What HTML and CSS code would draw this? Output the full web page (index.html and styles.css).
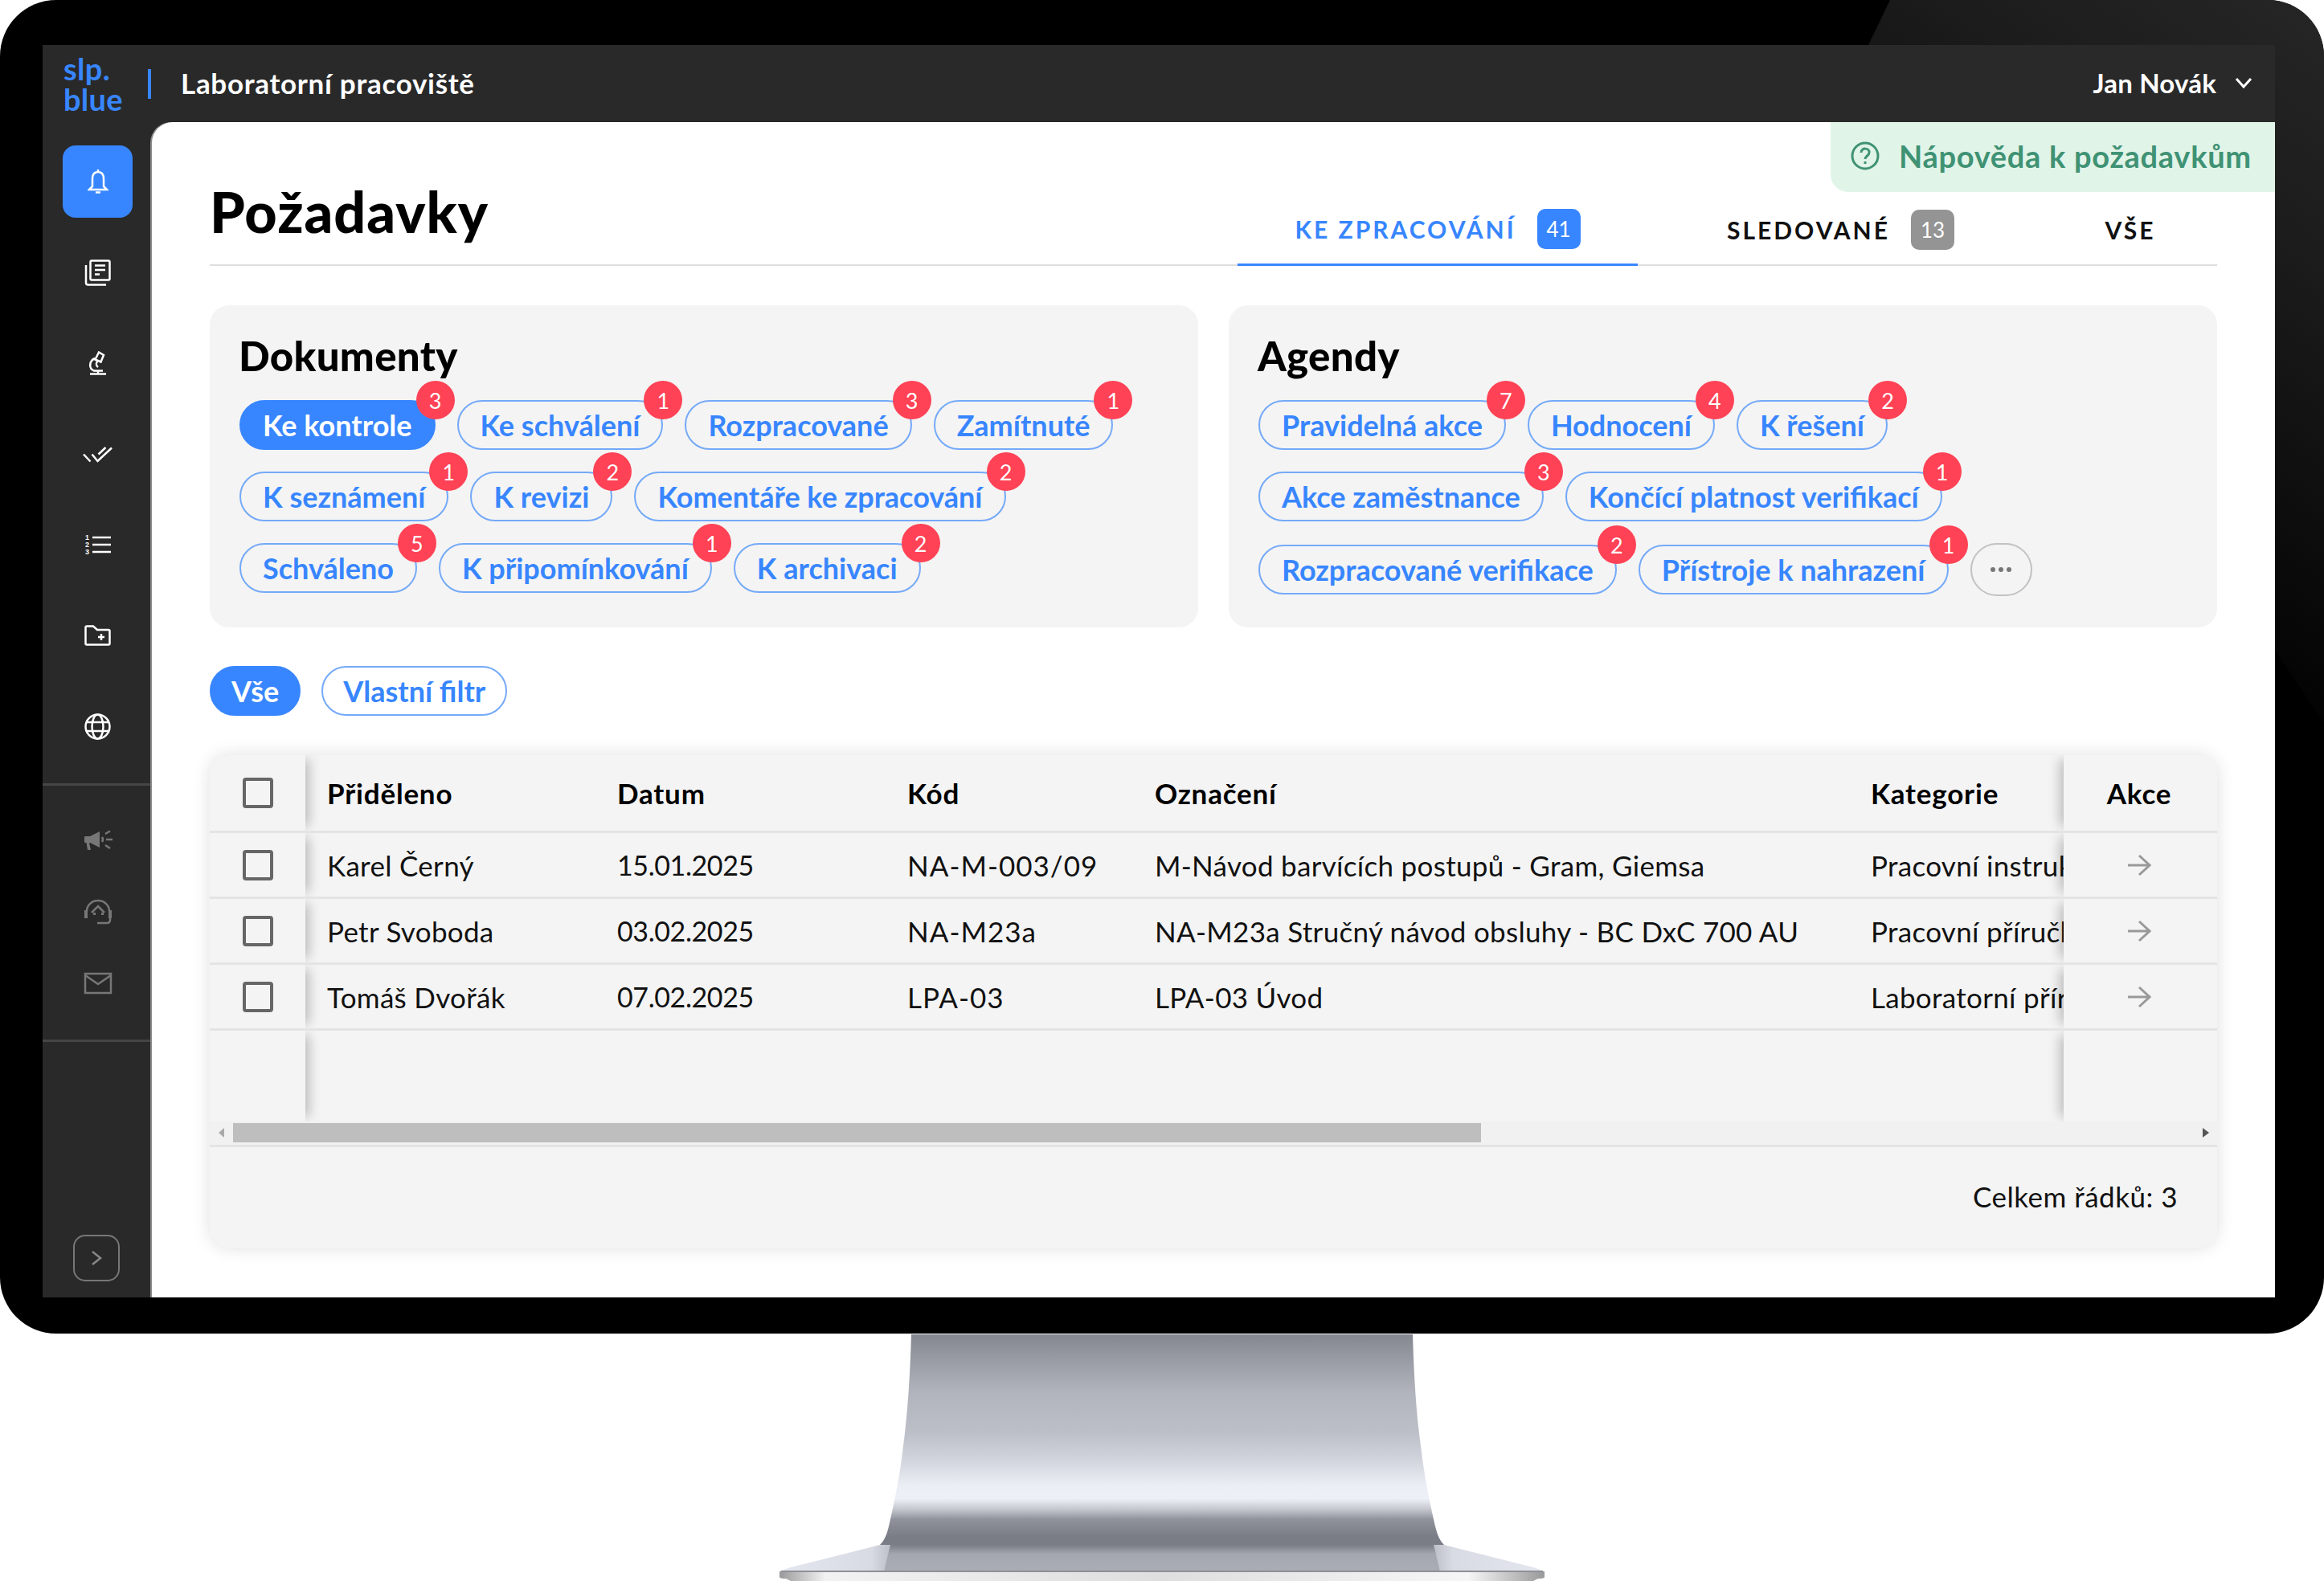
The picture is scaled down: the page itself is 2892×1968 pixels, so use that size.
FILE: index.html
```html
<!DOCTYPE html>
<html lang="cs">

<head>
  <meta charset="UTF-8">
  <title>Požadavky</title>
  <link rel="stylesheet" href="styles.css">
</head>

<body>
  <div class="monitor">
    <div class="screen">
      <header class="topbar">
        <div class="logo"><span>slp.</span><span>blue</span></div>
        <div class="logo-line"></div>
        <div class="app-name">Laboratorní pracoviště</div>
        <div class="user">
          Jan Novák
          <svg class="user-arrow" viewBox="0 0 22 14"><path d="M2 2 L11 12 L20 2" /></svg>
        </div>
      </header>

      <div class="workspace">
        <nav class="sidebar">
          <div class="nav-main">
            <a class="nav-item active">
              <svg width="26" height="32" viewBox="0 0 26 32"><path d="M13 4 C8 4 6 8 6 13 V22 L2 26 H24 L20 22 V13 C20 8 18 4 13 4 Z M13 1 V4 M10 29.5 H16" /></svg>
            </a>
            <a class="nav-item">
              <svg width="33" height="33" viewBox="0 0 33 33"><path d="M9 1.500 H30 Q31.500 1.500 31.500 3 V24 Q31.500 25.500 30 25.500 H9 Q7.500 25.500 7.500 24 V3 Q7.500 1.500 9 1.500 Z M2 7 V29 Q2 31.500 4.500 31.500 H27 M13 7.500 H26 M13 13 H26 M13 18.500 H19" /></svg>
            </a>
            <a class="nav-item">
              <svg width="24" height="30" viewBox="0 0 24 30"><path d="M13 1.500 L8.500 10.500 L15.500 13.500 L19 5 Z M8 9 C1 12 0 22 7 24.500 H18 M11 13 A5 5 0 0 0 12 20 M2 28.500 H22 M12 24.500 V28.500" /></svg>
            </a>
            <a class="nav-item">
              <svg width="37" height="21" viewBox="0 0 37 21"><path d="M1 10.500 L9.500 19.500 M11.500 10.500 L18.500 19 L36 2.500 M19.500 10.500 L28.500 2" /></svg>
            </a>
            <a class="nav-item">
              <svg width="32" height="26" viewBox="0 0 32 26">
                <path d="M9 4 H32 M9 13 H32 M9 22 H32" />
                <text class="nav-num" x="0" y="7">1</text>
                <text class="nav-num" x="0" y="16">2</text>
                <text class="nav-num" x="0" y="25">3</text>
              </svg>
            </a>
            <a class="nav-item">
              <svg width="33" height="26" viewBox="0 0 33 26"><path d="M1.500 3 Q1.500 1.500 3 1.500 H11 L16 6 H30 Q31.500 6 31.500 7.500 V23 Q31.500 24.500 30 24.500 H3 Q1.500 24.500 1.500 23 Z M21 11 V19 M17 15 H25" /></svg>
            </a>
            <a class="nav-item">
              <svg width="33" height="33" viewBox="0 0 33 33"><circle cx="16.500" cy="16.500" r="15" /><ellipse cx="16.500" cy="16.500" rx="7" ry="15" /><path d="M2 11 H31 M2 22 H31" /></svg>
            </a>
          </div>

          <div class="nav-extra">
            <a class="nav-item dim">
              <svg width="36" height="27" viewBox="0 0 36 27">
                <path class="fill" d="M1 9 Q1 8 2 8 H8 L20 2 V22 L8 16 H7 L9 25 H5 L3.500 16 H2 Q1 16 1 15 Z" />
                <path d="M23 9 Q25 12 23 15 M27 5 L33 1.500 M28 12 H36 M27 19 L33 23" />
              </svg>
            </a>
            <a class="nav-item dim">
              <svg width="36" height="32" viewBox="0 0 36 32">
                <path d="M4 15 A14 13 0 0 1 32 15 M10 17 L18 9 L26 17 M33 23 V26 Q33 30 29 30 H17" />
                <path class="fill" d="M1 14 H5 V24 H1 Z M31 14 H35 V24 H31 Z M12 17 H15 V20 H12 Z M22 17 H25 V20 H22 Z" />
              </svg>
            </a>
            <a class="nav-item dim">
              <svg width="36" height="28" viewBox="0 0 36 28"><path d="M2 2 H34 V26 H2 Z M2 4 L18 15 L34 4" /></svg>
            </a>
          </div>

          <a class="expand">
            <svg width="14" height="20" viewBox="0 0 14 20"><path d="M2 2 L12 10 L2 18" /></svg>
          </a>
        </nav>

        <main class="content">
          <a class="help">
            <svg width="36" height="36" viewBox="0 0 36 36"><circle cx="18" cy="18" r="16" /><path d="M13 14 C13 7 24 8 23 14 C23 18 18 18 18 22 M18 25 V28" /></svg>
            Nápověda k požadavkům
          </a>

          <div class="page-head">
            <h1 class="page-title">Požadavky</h1>
            <div class="tabs">
              <a class="tab tab-first active">KE ZPRACOVÁNÍ <span class="tab-count">41</span></a>
              <a class="tab tab-second">SLEDOVANÉ <span class="tab-count grey">13</span></a>
              <a class="tab tab-third">VŠE</a>
            </div>
          </div>

          <div class="panels">
            <section class="panel">
              <h2 class="panel-title">Dokumenty</h2>
              <div class="chip-row">
                <a class="chip active">Ke kontrole<span class="count">3</span></a>
                <a class="chip">Ke schválení<span class="count">1</span></a>
                <a class="chip">Rozpracované<span class="count">3</span></a>
                <a class="chip">Zamítnuté<span class="count">1</span></a>
              </div>
              <div class="chip-row">
                <a class="chip">K seznámení<span class="count">1</span></a>
                <a class="chip">K revizi<span class="count">2</span></a>
                <a class="chip">Komentáře ke zpracování<span class="count">2</span></a>
              </div>
              <div class="chip-row">
                <a class="chip">Schváleno<span class="count">5</span></a>
                <a class="chip">K připomínkování<span class="count">1</span></a>
                <a class="chip">K archivaci<span class="count">2</span></a>
              </div>
            </section>

            <section class="panel">
              <h2 class="panel-title">Agendy</h2>
              <div class="chip-row">
                <a class="chip">Pravidelná akce<span class="count">7</span></a>
                <a class="chip">Hodnocení<span class="count">4</span></a>
                <a class="chip">K řešení<span class="count">2</span></a>
              </div>
              <div class="chip-row">
                <a class="chip">Akce zaměstnance<span class="count">3</span></a>
                <a class="chip">Končící platnost verifikací<span class="count">1</span></a>
              </div>
              <div class="chip-row">
                <a class="chip">Rozpracované verifikace<span class="count">2</span></a>
                <a class="chip">Přístroje k nahrazení<span class="count">1</span></a>
                <a class="more"><i></i><i></i><i></i></a>
              </div>
            </section>
          </div>

          <div class="filters">
            <a class="chip active">Vše</a>
            <a class="chip">Vlastní filtr</a>
          </div>

          <div class="table-card">
            <div class="row head">
              <div class="cell check"><span class="box"></span></div>
              <div class="cell">Přiděleno</div>
              <div class="cell">Datum</div>
              <div class="cell">Kód</div>
              <div class="cell">Označení</div>
              <div class="cell">Kategorie</div>
              <div class="cell action">Akce</div>
            </div>
            <div class="row">
              <div class="cell check"><span class="box"></span></div>
              <div class="cell">Karel Černý</div>
              <div class="cell date">15.01.2025</div>
              <div class="cell code">NA-M-003/09</div>
              <div class="cell">M-Návod barvících postupů - Gram, Giemsa</div>
              <div class="cell">Pracovní instrukce</div>
              <div class="cell action"><svg class="go" viewBox="0 0 30 30"><path d="M1 15 H28 M15 3 L28 15 L15 27" /></svg></div>
            </div>
            <div class="row">
              <div class="cell check"><span class="box"></span></div>
              <div class="cell">Petr Svoboda</div>
              <div class="cell date">03.02.2025</div>
              <div class="cell code">NA-M23a</div>
              <div class="cell">NA-M23a Stručný návod obsluhy - BC DxC 700 AU</div>
              <div class="cell">Pracovní příručka</div>
              <div class="cell action"><svg class="go" viewBox="0 0 30 30"><path d="M1 15 H28 M15 3 L28 15 L15 27" /></svg></div>
            </div>
            <div class="row">
              <div class="cell check"><span class="box"></span></div>
              <div class="cell">Tomáš Dvořák</div>
              <div class="cell date">07.02.2025</div>
              <div class="cell code">LPA-03</div>
              <div class="cell">LPA-03 Úvod</div>
              <div class="cell">Laboratorní příručka</div>
              <div class="cell action"><svg class="go" viewBox="0 0 30 30"><path d="M1 15 H28 M15 3 L28 15 L15 27" /></svg></div>
            </div>
            <div class="row filler">
              <div class="cell check"></div>
              <div class="cell"></div>
              <div class="cell"></div>
              <div class="cell"></div>
              <div class="cell"></div>
              <div class="cell"></div>
              <div class="cell action"></div>
            </div>

            <div class="scrollbar">
              <span class="scroll-left"></span>
              <span class="scroll-thumb"></span>
              <span class="scroll-right"></span>
            </div>

            <div class="table-foot">Celkem řádků: 3</div>
          </div>
        </main>
      </div>
    </div>
  </div>

  <svg class="stand" viewBox="0 0 1000 308" width="1000" height="308">
    <defs>
      <linearGradient id="neck" x1="0" y1="0" x2="0" y2="1">
        <stop offset="0" stop-color="#84878f" />
        <stop offset="0.148" stop-color="#9da0a8" />
        <stop offset="0.275" stop-color="#b1b4bc" />
        <stop offset="0.465" stop-color="#bcbfc8" />
        <stop offset="0.59" stop-color="#d0d3db" />
        <stop offset="0.72" stop-color="#eceef5" />
        <stop offset="0.78" stop-color="#eef0f7" />
        <stop offset="0.83" stop-color="#c5c8ce" />
        <stop offset="0.88" stop-color="#8f929a" />
        <stop offset="0.96" stop-color="#7a7d86" />
        <stop offset="1" stop-color="#7a7d86" />
      </linearGradient>
      <linearGradient id="flank" x1="0" y1="0" x2="1" y2="0">
        <stop offset="0" stop-color="#e4e7ef" />
        <stop offset="0.12" stop-color="#d8dbe3" />
        <stop offset="0.16" stop-color="#acafb7" />
        <stop offset="0.84" stop-color="#acafb7" />
        <stop offset="0.88" stop-color="#d8dbe3" />
        <stop offset="1" stop-color="#e4e7ef" />
      </linearGradient>
      <linearGradient id="foot" x1="0" y1="0" x2="0" y2="1">
        <stop offset="0" stop-color="#7a7d86" />
        <stop offset="0.35" stop-color="#a4a7af" />
        <stop offset="1" stop-color="#aaadb5" />
      </linearGradient>
      <linearGradient id="rim" x1="0" y1="0" x2="1" y2="0">
        <stop offset="0" stop-color="#9a9a9c" />
        <stop offset="0.06" stop-color="#f2f2f2" />
        <stop offset="0.5" stop-color="#dedede" />
        <stop offset="0.9" stop-color="#f6f6f6" />
        <stop offset="1" stop-color="#9a9a9c" />
      </linearGradient>
    </defs>
    <path fill="url(#flank)" d="M38 291 L149 263 H851 L962 291 Q976 295 976 298 H24 Q24 295 38 291 Z" />
    <path fill="url(#foot)" d="M162 263 H838 L846 296 H154 Z" />
    <path fill="url(#neck)" d="M188 1 H812 C814 70 818 110 822 140 C826 175 832 205 840 240 Q844 257 851 263 H149 Q156 257 160 240 C168 205 174 175 178 140 C182 110 186 70 188 1 Z" />
    <path fill="url(#rim)" d="M24 296 H976 V303 Q976 305 968 305 L962 308 H38 L32 305 Q24 305 24 303 Z" />
    <path fill="#8f9097" d="M26 295 H974 V297 H26 Z" />
  </svg>
</body>

</html>
```

FILE: styles.css
```css
body {
  margin: 0;
  background: #fff;
  font-family: Lato, "Open Sans", sans-serif;
  color: #111;
}

a {
  text-decoration: none;
  cursor: pointer;
}

/* Monitor frame */
.monitor {
  position: relative;
  box-sizing: border-box;
  width: 2892px;
  height: 1660px;
  padding: 56px 61px 45px 53px;
  background: #000;
  border-radius: 70px;
  overflow: hidden;
}

.monitor::before {
  content: "";
  position: absolute;
  top: 0;
  right: 0;
  width: 567px;
  height: 900px;
  background: linear-gradient(215deg, #262626 0, #1c1c1c 25%, #000 75%);
  clip-path: polygon(27px 0, 100% 0, 100% 100%, 0 56px);
}

.screen {
  position: relative;
  display: flex;
  flex-direction: column;
  height: 100%;
  background: #292929;
}

/* Top bar */
.topbar {
  display: flex;
  align-items: center;
  height: 96px;
  padding-left: 26px;
  padding-right: 28px;
  color: #fff;
}

.logo {
  width: 105px;
  color: #3886ff;
  font-size: 38px;
  font-weight: 700;
  letter-spacing: 0.3px;
}

.logo span {
  display: block;
  height: 38px;
  line-height: 38px;
}

.logo-line {
  width: 4px;
  height: 37px;
  background: #3886ff;
}

.app-name {
  margin-left: 37px;
  padding-bottom: 2px;
  font-size: 35px;
  font-weight: 700;
  letter-spacing: 0.7px;
}

.user {
  display: flex;
  align-items: center;
  gap: 23px;
  margin-left: auto;
  padding-bottom: 2px;
  font-size: 33px;
  font-weight: 700;
  letter-spacing: 0.2px;
}

.user-arrow {
  width: 22px;
  height: 14px;
  fill: none;
  stroke: #fff;
  stroke-width: 3;
}

.workspace {
  display: flex;
  flex: 1;
  min-height: 0;
}

/* Sidebar */
.sidebar {
  display: flex;
  flex-direction: column;
  flex: none;
  width: 136px;
}

.sidebar svg {
  fill: none;
  stroke: #fff;
  stroke-width: 2.5;
}

.nav-main {
  padding-top: 29px;
  padding-bottom: 3px;
  border-bottom: 3px solid #454545;
}

.nav-item {
  display: flex;
  align-items: center;
  justify-content: center;
  width: 87px;
  height: 90px;
  margin-left: 25px;
  margin-bottom: 23px;
  border-radius: 16px;
}

.nav-item.active {
  background: #3886ff;
}

.nav-num {
  fill: #fff;
  stroke: none;
  font-family: "Liberation Sans", sans-serif;
  font-size: 9px;
  font-weight: 700;
}

.nav-extra {
  padding-top: 24px;
  padding-bottom: 25px;
  border-bottom: 3px solid #454545;
}

.nav-extra .nav-item {
  height: 88px;
  margin-bottom: 1px;
}

.sidebar .dim svg {
  stroke: #777;
}

.sidebar .dim .fill {
  fill: #777;
  stroke: none;
}

.expand {
  display: flex;
  align-items: center;
  justify-content: center;
  box-sizing: border-box;
  width: 58px;
  height: 58px;
  margin-top: auto;
  margin-bottom: 20px;
  margin-left: 38px;
  border: 2px solid #777;
  border-radius: 15px;
}

.sidebar .expand svg {
  stroke: #888;
}

/* Content */
.content {
  position: relative;
  flex: 1;
  box-sizing: border-box;
  padding: 0 72px;
  background: #fff;
  border-top-left-radius: 26px;
  box-shadow: -2px 0 0 #8a8a8a;
}

.help {
  position: absolute;
  top: 0;
  right: 0;
  display: flex;
  align-items: center;
  gap: 24px;
  box-sizing: border-box;
  width: 553px;
  height: 87px;
  padding-left: 25px;
  padding-bottom: 3px;
  background: #e1f4e8;
  border-bottom-left-radius: 22px;
  color: #3f9274;
  font-size: 38px;
  font-weight: 700;
  letter-spacing: 0.7px;
  white-space: nowrap;
}

.help svg {
  flex: none;
  fill: none;
  stroke: #3f9274;
  stroke-width: 3;
}

.page-head {
  display: flex;
  justify-content: space-between;
  align-items: flex-end;
  box-sizing: border-box;
  height: 179px;
  border-bottom: 2px solid #dedede;
}

.page-title {
  margin: 0 0 26px 0;
  font-size: 70px;
  font-weight: 900;
  line-height: 80px;
  letter-spacing: 1px;
  color: #000;
}

.tabs {
  display: flex;
}

.tab {
  display: flex;
  align-items: center;
  justify-content: center;
  gap: 26px;
  box-sizing: border-box;
  height: 88px;
  margin-bottom: -2px;
  padding-bottom: 2px;
  color: #111;
  font-size: 30px;
  font-weight: 700;
  letter-spacing: 3px;
}

.tab-first {
  width: 498px;
}

.tab-second {
  width: 505px;
}

.tab-third {
  width: 216px;
}

.tab.active {
  color: #3886ff;
  border-bottom: 3px solid #3886ff;
}

.tab-count {
  display: flex;
  align-items: center;
  justify-content: center;
  width: 54px;
  height: 50px;
  background: #3886ff;
  border-radius: 10px;
  color: #fff;
  font-size: 26px;
  font-weight: 400;
  letter-spacing: 0;
}

.tab-count.grey {
  background: #949494;
}

/* Panels with chips */
.panels {
  display: flex;
  gap: 38px;
  margin-top: 49px;
}

.panel {
  flex: 1;
  box-sizing: border-box;
  height: 401px;
  padding: 31px 37px 0;
  background: #f4f4f4;
  border-radius: 24px;
}

.panel-title {
  margin: 0 0 23px -1px;
  font-size: 51px;
  font-weight: 900;
  line-height: 64px;
  letter-spacing: 0.3px;
  color: #000;
}

.chip-row {
  display: flex;
  align-items: center;
  gap: 27px;
  margin-bottom: 27px;
}

.chip {
  position: relative;
  display: flex;
  align-items: center;
  box-sizing: border-box;
  height: 62px;
  padding: 0 27px;
  border: 2px solid #74a9f8;
  border-radius: 31px;
  color: #3886ff;
  font-size: 36px;
  font-weight: 700;
  white-space: nowrap;
}

.chip.active {
  background: #3886ff;
  border-color: #3886ff;
  color: #fff;
}

.count {
  position: absolute;
  top: -26px;
  right: -26px;
  display: flex;
  align-items: center;
  justify-content: center;
  width: 48px;
  height: 48px;
  background: #ff4255;
  border-radius: 50%;
  color: #fff;
  font-size: 27px;
  font-weight: 400;
}

.more {
  display: flex;
  align-items: center;
  justify-content: center;
  gap: 4px;
  box-sizing: border-box;
  width: 77px;
  height: 66px;
  border: 2px solid #c2c2c2;
  border-radius: 33px;
}

.more i {
  width: 6px;
  height: 6px;
  background: #777;
  border-radius: 50%;
}

.filters {
  display: flex;
  gap: 26px;
  margin-top: 48px;
}

.filters .chip {
  padding: 0 25px;
}

/* Table */
.table-card {
  margin-top: 49px;
  background: #f4f4f4;
  border-radius: 24px;
  box-shadow: 0 0 22px rgba(0, 0, 0, 0.13);
  overflow: hidden;
}

.row {
  display: flex;
  height: 82px;
  box-sizing: border-box;
  border-bottom: 3px solid #e4e4e4;
  font-size: 35px;
  letter-spacing: 0.3px;
}

.row.head {
  height: 97px;
  font-weight: 700;
  letter-spacing: 0.8px;
  color: #000;
}

.row.filler {
  height: 113px;
  border-bottom: 0;
}

.cell {
  display: flex;
  align-items: center;
  flex: none;
  box-sizing: border-box;
  padding-left: 27px;
  white-space: nowrap;
  overflow: hidden;
}

.cell:nth-child(2),
.cell:nth-child(3) {
  width: 361px;
}

.cell:nth-child(4) {
  width: 308px;
}

.cell:nth-child(5) {
  width: 891px;
}

.cell:nth-child(6) {
  width: 267px;
}

.cell.date {
  font-size: 34px;
  letter-spacing: -0.4px;
}

.cell.code {
  letter-spacing: 1px;
}

.cell.check {
  position: relative;
  z-index: 1;
  justify-content: center;
  width: 119px;
  padding: 0;
  background: #f4f4f4;
  box-shadow: 10px 0 14px -6px rgba(0, 0, 0, 0.25);
  clip-path: inset(0 -24px 0 0);
}

.cell.action {
  position: relative;
  z-index: 1;
  justify-content: center;
  width: 191px;
  padding: 0 3px 0 0;
  background: #f4f4f4;
  box-shadow: -10px 0 14px -6px rgba(0, 0, 0, 0.25);
  clip-path: inset(0 0 0 -24px);
}

.box {
  box-sizing: border-box;
  width: 38px;
  height: 38px;
  border: 4px solid #666;
  border-radius: 4px;
}

.go {
  width: 30px;
  height: 30px;
  fill: none;
  stroke: #999;
  stroke-width: 3;
}

.scrollbar {
  display: flex;
  align-items: center;
  box-sizing: border-box;
  height: 32px;
  padding-bottom: 2px;
  background: #f1f1f1;
  border-bottom: 3px solid #e4e4e4;
}

.scroll-left {
  width: 0;
  height: 0;
  margin-left: 11px;
  margin-right: 11px;
  border-top: 6px solid transparent;
  border-bottom: 6px solid transparent;
  border-right: 7px solid #aaa;
}

.scroll-thumb {
  width: 1553px;
  height: 24px;
  background: #bebebe;
}

.scroll-right {
  width: 0;
  height: 0;
  margin-left: auto;
  margin-right: 10px;
  border-top: 6px solid transparent;
  border-bottom: 6px solid transparent;
  border-left: 8px solid #555;
}

.table-foot {
  display: flex;
  justify-content: flex-end;
  align-items: center;
  height: 122px;
  padding-right: 49px;
  padding-bottom: 3px;
  font-size: 35px;
  letter-spacing: 0.5px;
}

/* Stand under the monitor */
.stand {
  display: block;
  margin: 0 auto;
}
```
